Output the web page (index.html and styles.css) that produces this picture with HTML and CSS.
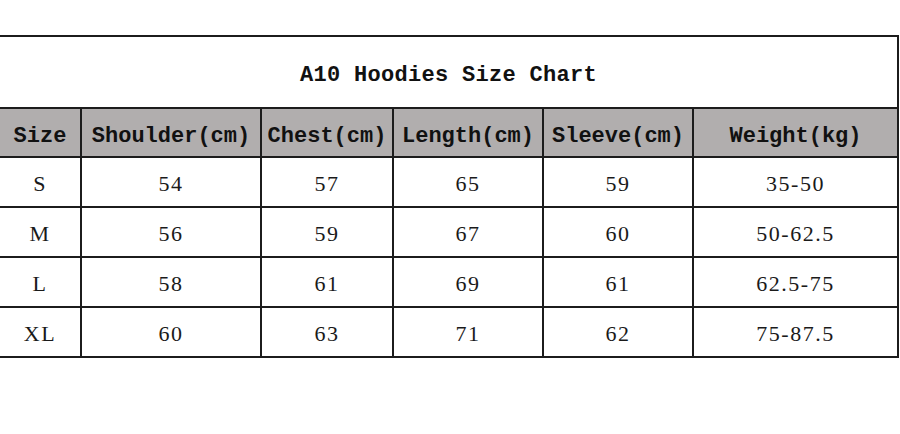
FILE: index.html
```html
<!DOCTYPE html>
<html>
<head>
<meta charset="utf-8">
<link rel="stylesheet" href="styles.css">
</head>
<body>
<table class="chart">
  <colgroup>
    <col class="c1"><col class="c2"><col class="c3"><col class="c4"><col class="c5"><col class="c6">
  </colgroup>
  <tr class="title-row"><td colspan="6">A10 Hoodies Size Chart</td></tr>
  <tr class="head-row">
    <th>Size</th><th>Shoulder(cm)</th><th>Chest(cm)</th><th>Length(cm)</th><th>Sleeve(cm)</th><th>Weight(kg)</th>
  </tr>
  <tr class="data-row"><td>S</td><td>54</td><td>57</td><td>65</td><td>59</td><td>35-50</td></tr>
  <tr class="data-row"><td>M</td><td>56</td><td>59</td><td>67</td><td>60</td><td>50-62.5</td></tr>
  <tr class="data-row"><td>L</td><td>58</td><td>61</td><td>69</td><td>61</td><td>62.5-75</td></tr>
  <tr class="data-row"><td>XL</td><td>60</td><td>63</td><td>71</td><td>62</td><td>75-87.5</td></tr>
</table>
</body>
</html>
```
FILE: styles.css
```css
html, body {
  margin: 0;
  padding: 0;
  background: #fff;
}
body {
  padding-top: 35px;
  font-family: "Liberation Mono", "DejaVu Sans Mono", monospace;
  color: #111;
}
.chart {
  border-collapse: collapse;
  table-layout: fixed;
  margin-left: -2px;
}
.chart td, .chart th {
  border: 2px solid #1c1c1c;
  padding: 0;
  text-align: center;
  vertical-align: middle;
}
.c1 { width: 82px; }
.c2 { width: 180px; }
.c3 { width: 132px; }
.c4 { width: 150px; }
.c5 { width: 150px; }
.c6 { width: 205px; }
.title-row td {
  height: 64px;
  padding-top: 6px;
  font-size: 22px;
  font-weight: bold;
  letter-spacing: 0.3px;
}
.head-row th {
  height: 39px;
  padding-top: 8px;
  background: #b1aeae;
  font-size: 22px;
  font-weight: bold;
}
.data-row td {
  height: 44px;
  padding-top: 4px;
  font-family: "Liberation Serif", "Times New Roman", serif;
  font-size: 22px;
  letter-spacing: 1.5px;
  color: #1a1a1a;
}
.data-row:nth-child(6) td {
  border-top-color: #555;
}
```
